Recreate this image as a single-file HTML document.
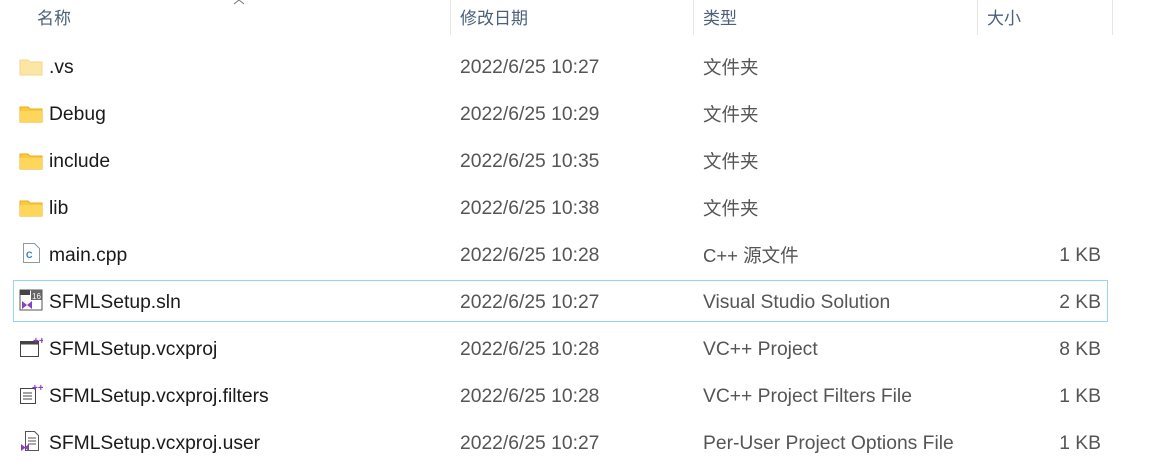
<!DOCTYPE html>
<html><head><meta charset="utf-8"><style>
body{margin:0;width:1155px;height:468px;background:#fff;overflow:hidden;position:relative;font-family:"Liberation Sans","Noto Sans CJK SC",sans-serif;}
.h{position:absolute;top:8px;font-size:17px;color:#4c607a;line-height:22px}
.sep{position:absolute;top:0;width:1px;height:35px;background:#e5e5e5;}
.r{position:absolute;left:0;width:1155px;height:47px;font-size:19.3px;color:#1a1a1a;}
.r span{position:absolute;top:14px;white-space:nowrap;line-height:22px}
.n{left:49px}.d{left:460px;color:#555}.t{left:703px;color:#555}.s{right:54px;color:#555}
.r span.cj{top:14px;font-size:18.5px}
.ic{position:absolute;left:19px;top:14px;}
</style></head><body>
<div class="h" style="left:37px">名称</div>
<svg style="position:absolute;left:233px;top:0" width="12" height="5"><path d="M1 4l5-4 5 4" stroke="#777" fill="none"/></svg>
<div class="sep" style="left:450px"></div>
<div class="h" style="left:460px">修改日期</div>
<div class="sep" style="left:693px"></div>
<div class="h" style="left:703px">类型</div>
<div class="sep" style="left:977px"></div>
<div class="h" style="left:987px">大小</div>
<div class="sep" style="left:1112px"></div>

<div class="r" style="top:43px"><svg class="ic" width="24" height="20"><path d="M1 3h8l2 2h12v13H1z" fill="#fbe6a6" stroke="#f3d78a"/></svg><span class="n">.vs</span><span class="d">2022/6/25 10:27</span><span class="t cj">文件夹</span></div>
<div class="r" style="top:90px"><svg class="ic" width="24" height="20"><path d="M1 3h8l2 2h12v13H1z" fill="#fcc93e" stroke="#e6ad1c"/><path d="M1 7h22v11H1z" fill="#ffd65c"/></svg><span class="n">Debug</span><span class="d">2022/6/25 10:29</span><span class="t cj">文件夹</span></div>
<div class="r" style="top:137px"><svg class="ic" width="24" height="20"><path d="M1 3h8l2 2h12v13H1z" fill="#fcc93e" stroke="#e6ad1c"/><path d="M1 7h22v11H1z" fill="#ffd65c"/></svg><span class="n">include</span><span class="d">2022/6/25 10:35</span><span class="t cj">文件夹</span></div>
<div class="r" style="top:184px"><svg class="ic" width="24" height="20"><path d="M1 3h8l2 2h12v13H1z" fill="#fcc93e" stroke="#e6ad1c"/><path d="M1 7h22v11H1z" fill="#ffd65c"/></svg><span class="n">lib</span><span class="d">2022/6/25 10:38</span><span class="t cj">文件夹</span></div>
<div class="r" style="top:231px"><svg class="ic" width="20" height="22" style="left:22px;top:11px"><path d="M1.5 1.5h11l5 5v14h-16z" fill="#fff" stroke="#8a9aa8"/><text x="4" y="16" font-size="9" fill="#2a7bbf" font-weight="bold" font-family="Liberation Sans">C</text></svg><span class="n">main.cpp</span><span class="d">2022/6/25 10:28</span><span class="t cj">C++ 源文件</span><span class="s">1 KB</span></div>
<div style="position:absolute;left:13px;top:280px;width:1093px;height:40px;border:1px solid #99d1ff;"></div>
<div class="r" style="top:278px"><svg class="ic" width="24" height="22" style="top:11px"><rect x="1" y="1" width="22" height="20" fill="#fff" stroke="#555"/><rect x="1" y="1" width="10" height="5" fill="#444"/><rect x="12" y="1" width="11" height="10" fill="#666"/><text x="13" y="10" font-size="8" fill="#fff" font-family="Liberation Sans">16</text><path d="M3 12l5 4 5-4v8l-5-4-5 4z" fill="#8a3fbf"/></svg><span class="n">SFMLSetup.sln</span><span class="d">2022/6/25 10:27</span><span class="t">Visual Studio Solution</span><span class="s">2 KB</span></div>
<div class="r" style="top:325px"><svg class="ic" width="24" height="22" style="top:11px"><rect x="1.5" y="5.5" width="18" height="15" fill="#fff" stroke="#444"/><rect x="1.5" y="5.5" width="18" height="3" fill="#444"/><text x="14" y="8" font-size="10" fill="#8a3fbf" font-weight="bold" font-family="Liberation Sans">++</text></svg><span class="n">SFMLSetup.vcxproj</span><span class="d">2022/6/25 10:28</span><span class="t">VC++ Project</span><span class="s">8 KB</span></div>
<div class="r" style="top:372px"><svg class="ic" width="24" height="22" style="top:11px"><rect x="1.5" y="5.5" width="15" height="15" fill="#fff" stroke="#444"/><path d="M4 10h9M4 13h9M4 16h9" stroke="#444"/><text x="13" y="8" font-size="10" fill="#8a3fbf" font-weight="bold" font-family="Liberation Sans">++</text></svg><span class="n">SFMLSetup.vcxproj.filters</span><span class="d">2022/6/25 10:28</span><span class="t">VC++ Project Filters File</span><span class="s">1 KB</span></div>
<div class="r" style="top:419px"><svg class="ic" width="24" height="22" style="top:11px"><path d="M6.5 1.5h9l4 4v15h-13z" fill="#fff" stroke="#555"/><path d="M9 8h8M9 11h8M9 14h8" stroke="#555"/><path d="M2 14l4 3 4-3v7l-4-3-4 3z" fill="#8a3fbf"/></svg><span class="n">SFMLSetup.vcxproj.user</span><span class="d">2022/6/25 10:27</span><span class="t">Per-User Project Options File</span><span class="s">1 KB</span></div>
</body></html>
